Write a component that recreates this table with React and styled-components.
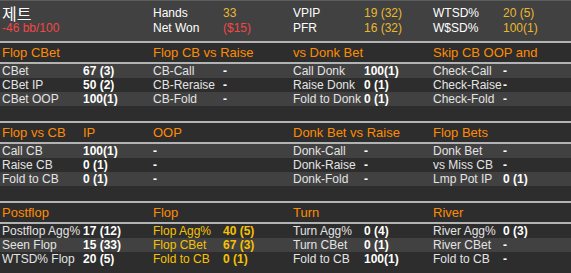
import React from "react";
import styled, { createGlobalStyle, css } from "styled-components";

const Global = createGlobalStyle`
  html, body { margin: 0; padding: 0; background: #2d2d2d; }
  body { font-family: "Liberation Sans", Arial, "Noto Sans CJK KR", sans-serif; font-size: 12px; }
`;

const COLS = "81px 70px 70px 70px 71px 69px 70px 1fr";

const Panel = styled.div`
  width: 571px;
  background: #2d2d2d;
  border-top: 1px solid #5c5c5c;
  overflow: hidden;
`;

const Summary = styled.div`
  display: grid;
  grid-template-columns: ${COLS};
  grid-auto-rows: 15px;
  height: 40px;
  box-sizing: border-box;
  padding-top: 5px;
  background: #414141;
  color: #ffffff;
`;

const SumCell = styled.div`
  padding-left: 2px;
  line-height: 15px;
  white-space: nowrap;
  color: ${(p) => (p.$tone === "red" ? "#f04848" : p.$tone === "gold" ? "#e9b82e" : "#ffffff")};
`;

const Name = styled(SumCell)`
  grid-column: span 2;
  font-size: 16px;
  font-family: "Noto Sans CJK KR", "Liberation Sans", sans-serif;
`;

const Rule = styled.div`
  height: 2px;
  background: #b3b3b3;
`;

const Section = styled.section`
  padding-bottom: ${(p) => p.$gap}px;
`;

const Row = styled.div`
  display: grid;
  grid-template-columns: ${COLS};
  height: ${(p) => (p.$head ? 19 : 14)}px;
  background: ${(p) => (p.$light ? "#414141" : "#2d2d2d")};
`;

const Cell = styled.div`
  padding-left: 2px;
  white-space: nowrap;
  line-height: 14px;
  color: #e4e4e4;
  ${(p) =>
    p.$kind === "head" &&
    css`
      font-size: 13px;
      line-height: 19px;
      color: #ff8c00;
    `}
  ${(p) =>
    p.$kind === "value" &&
    css`
      font-weight: bold;
      color: #ffffff;
    `}
  ${(p) =>
    p.$gold &&
    css`
      color: #f6c200;
    `}
`;

const sections = [
  {
    gap: 15,
    firstLight: true,
    head: ["Flop CBet", "", "Flop CB vs Raise", "", "vs Donk Bet", "", "Skip CB OOP and", ""],
    valueCols: [1, 3, 5, 7],
    rows: [
      ["CBet", "67 (3)", "CB-Call", "-", "Call Donk", "100(1)", "Check-Call", "-"],
      ["CBet IP", "50 (2)", "CB-Reraise", "-", "Raise Donk", "0 (1)", "Check-Raise", "-"],
      ["CBet OOP", "100(1)", "CB-Fold", "-", "Fold to Donk", "0 (1)", "Check-Fold", "-"],
    ],
  },
  {
    gap: 15,
    firstLight: true,
    head: ["Flop vs CB", "IP", "OOP", "", "Donk Bet vs Raise", "", "Flop Bets", ""],
    valueCols: [1, 2, 5, 7],
    rows: [
      ["Call CB", "100(1)", "-", "", "Donk-Call", "-", "Donk Bet", "-"],
      ["Raise CB", "0 (1)", "-", "", "Donk-Raise", "-", "vs Miss CB", "-"],
      ["Fold to CB", "0 (1)", "-", "", "Donk-Fold", "-", "Lmp Pot IP", "0 (1)"],
    ],
  },
  {
    gap: 10,
    firstLight: false,
    head: ["Postflop", "", "Flop", "", "Turn", "", "River", ""],
    valueCols: [1, 3, 5, 7],
    goldCols: [2, 3],
    rows: [
      ["Postflop Agg%", "17 (12)", "Flop Agg%", "40 (5)", "Turn Agg%", "0 (4)", "River Agg%", "0 (3)"],
      ["Seen Flop", "15 (33)", "Flop CBet", "67 (3)", "Turn CBet", "0 (1)", "River CBet", "-"],
      ["WTSD% Flop", "20 (5)", "Fold to CB", "0 (1)", "Fold to CB", "100(1)", "Fold to CB", "-"],
    ],
  },
];

const summary = [
  ["Hands", "33", "gold"],
  ["Net Won", "($15)", "red"],
  ["VPIP", "19 (32)", "gold"],
  ["PFR", "16 (32)", "gold"],
  ["WTSD%", "20 (5)", "gold"],
  ["W$SD%", "100(1)", "gold"],
];

export default function App() {
  return (
    <>
      <Global />
      <Panel>
        <Summary>
          <Name>제트</Name>
          <SumCell>{summary[0][0]}</SumCell>
          <SumCell $tone={summary[0][2]}>{summary[0][1]}</SumCell>
          <SumCell>{summary[2][0]}</SumCell>
          <SumCell $tone={summary[2][2]}>{summary[2][1]}</SumCell>
          <SumCell>{summary[4][0]}</SumCell>
          <SumCell $tone={summary[4][2]}>{summary[4][1]}</SumCell>
          <SumCell as="div" $tone="red" style={{ gridColumn: "span 2" }}>
            -46 bb/100
          </SumCell>
          <SumCell>{summary[1][0]}</SumCell>
          <SumCell $tone={summary[1][2]}>{summary[1][1]}</SumCell>
          <SumCell>{summary[3][0]}</SumCell>
          <SumCell $tone={summary[3][2]}>{summary[3][1]}</SumCell>
          <SumCell>{summary[5][0]}</SumCell>
          <SumCell $tone={summary[5][2]}>{summary[5][1]}</SumCell>
        </Summary>
        {sections.map((s, si) => (
          <Section key={si} $gap={s.gap}>
            <Rule />
            <Row $head>
              {s.head.map((h, i) => (
                <Cell key={i} $kind="head">
                  {h}
                </Cell>
              ))}
            </Row>
            <Rule />
            {s.rows.map((r, ri) => (
              <Row key={ri} $light={(ri % 2 === 0) === s.firstLight}>
                {r.map((c, ci) => (
                  <Cell
                    key={ci}
                    $kind={s.valueCols.includes(ci) ? "value" : "label"}
                    $gold={s.goldCols && s.goldCols.includes(ci)}
                  >
                    {c}
                  </Cell>
                ))}
              </Row>
            ))}
          </Section>
        ))}
      </Panel>
    </>
  );
}
